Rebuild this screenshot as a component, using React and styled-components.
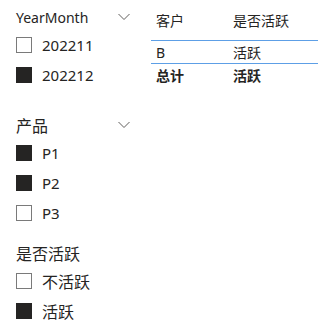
import styled, { createGlobalStyle } from "styled-components";

const GlobalStyle = createGlobalStyle`
  body {
    margin: 0;
    background: #ffffff;
    font-family: "Noto Sans", "Noto Sans CJK SC", sans-serif;
    color: #252423;
  }
`;

const Page = styled.div`
  display: flex;
  width: 330px;
  height: 332px;
  overflow: hidden;
`;

const SlicerColumn = styled.div`
  display: flex;
  flex-direction: column;
  width: 135px;
  padding-left: 16px;
`;

const Slicer = styled.section`
  display: flex;
  flex-direction: column;
  margin-top: ${(p) => p.$top}px;
`;

const SlicerHeader = styled.div`
  display: flex;
  align-items: center;
  justify-content: space-between;
  height: 24px;
  width: 114px;
  line-height: 24px;
`;

const Title = styled.span`
  font-size: ${(p) => (p.$cjk ? 16 : 14)}px;
`;

const Chevron = styled.svg`
  width: 12px;
  height: 8px;
  margin-top: -2px;
`;

const Item = styled.label`
  display: flex;
  align-items: center;
  gap: 10px;
  height: 30px;
`;

const ItemText = styled.span`
  font-size: ${(p) => (p.$cjk ? 16 : 15)}px;
`;

const Box = styled.span`
  box-sizing: border-box;
  width: 16px;
  height: 16px;
  flex: none;
  border: 1px solid ${(p) => (p.$checked ? "#252423" : "#7a7a7a")};
  background: ${(p) => (p.$checked ? "#252423" : "#ffffff")};
`;

const Table = styled.div`
  display: flex;
  flex-direction: column;
  width: 167px;
  font-size: 14px;
`;

const Row = styled.div`
  display: grid;
  grid-template-columns: 77px 1fr;
  align-items: center;
  height: ${(p) => p.$h}px;
  border-bottom: ${(p) => (p.$line ? "1.5px solid #5d9fe6" : "none")};
  font-weight: ${(p) => (p.$bold ? 700 : 400)};
`;

const Cell = styled.span`
  padding-left: 5px;
  white-space: nowrap;
`;

function ChevronDown() {
  return (
    <Chevron viewBox="0 0 12 8">
      <path d="M0.5 1 L6 6.5 L11.5 1" fill="none" stroke="#605e5c" strokeWidth="1" />
    </Chevron>
  );
}

const slicers = [
  {
    title: "YearMonth",
    top: 6,
    dropdown: true,
    items: [
      ["202211", false],
      ["202212", true],
    ],
  },
  {
    title: "产品",
    cjk: true,
    top: 24,
    dropdown: true,
    items: [
      ["P1", true],
      ["P2", true],
      ["P3", false],
    ],
  },
  {
    title: "是否活跃",
    cjk: true,
    top: 14,
    dropdown: false,
    items: [
      ["不活跃", false, true],
      ["活跃", true, true],
    ],
  },
];

export default function App() {
  return (
    <Page>
      <GlobalStyle />
      <SlicerColumn>
        {slicers.map((s) => (
          <Slicer key={s.title} $top={s.top}>
            <SlicerHeader>
              <Title $cjk={s.cjk}>{s.title}</Title>
              {s.dropdown && <ChevronDown />}
            </SlicerHeader>
            {s.items.map(([label, checked, cjk]) => (
              <Item key={label}>
                <Box $checked={checked} />
                <ItemText $cjk={cjk}>{label}</ItemText>
              </Item>
            ))}
          </Slicer>
        ))}
      </SlicerColumn>
      <Table>
        <Row $h={40} $line>
          <Cell>客户</Cell>
          <Cell>是否活跃</Cell>
        </Row>
        <Row $h={22} $line>
          <Cell>B</Cell>
          <Cell>活跃</Cell>
        </Row>
        <Row $h={22} $bold>
          <Cell>总计</Cell>
          <Cell>活跃</Cell>
        </Row>
      </Table>
    </Page>
  );
}
